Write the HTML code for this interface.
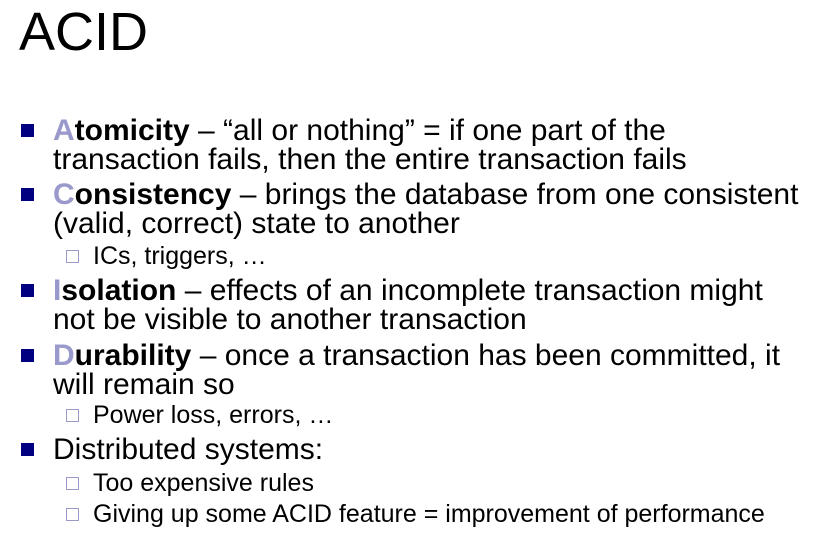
<!DOCTYPE html>
<html><head><meta charset="utf-8"><style>
body{margin:0;width:833px;height:533px;background:#fff;position:relative;overflow:hidden;font-family:"Liberation Sans",Arial,sans-serif;color:#000}
.t{position:absolute;left:19px;top:1px;font-size:54px;line-height:62px;white-space:nowrap}
.l{position:absolute;left:53px;font-size:30px;line-height:29px;white-space:nowrap}
.s{position:absolute;left:93px;font-size:25px;line-height:24px;white-space:nowrap}
.b{position:absolute;left:21px;width:13px;height:13px;background:#000080}
.q{position:absolute;left:66px;width:11px;height:11px;border:1.5px solid #9999cc}
.a{color:#9999cc;font-weight:bold}
b{font-weight:bold}
</style></head><body>
<div class="t">ACID</div>

<div class="b" style="top:124px"></div>
<div class="l" style="top:116px"><span class="a">A</span><b>tomicity</b> – “all or nothing” = if one part of the</div>
<div class="l" style="top:145px">transaction fails, then the entire transaction fails</div>

<div class="b" style="top:188px"></div>
<div class="l" style="top:180px"><span class="a">C</span><b>onsistency</b> – brings the database from one consistent</div>
<div class="l" style="top:209px">(valid, correct) state to another</div>

<div class="q" style="top:250px"></div>
<div class="s" style="top:244px">ICs, triggers, …</div>

<div class="b" style="top:284px"></div>
<div class="l" style="top:276px"><span class="a">I</span><b>solation</b> – effects of an incomplete transaction might</div>
<div class="l" style="top:305px">not be visible to another transaction</div>

<div class="b" style="top:349px"></div>
<div class="l" style="top:341px"><span class="a">D</span><b>urability</b> – once a transaction has been committed, it</div>
<div class="l" style="top:370px">will remain so</div>

<div class="q" style="top:409px"></div>
<div class="s" style="top:403px">Power loss, errors, …</div>

<div class="b" style="top:443px"></div>
<div class="l" style="top:435px">Distributed systems:</div>

<div class="q" style="top:477px"></div>
<div class="s" style="top:471px">Too expensive rules</div>

<div class="q" style="top:508px"></div>
<div class="s" style="top:502px">Giving up some ACID feature = improvement of performance</div>
</body></html>
